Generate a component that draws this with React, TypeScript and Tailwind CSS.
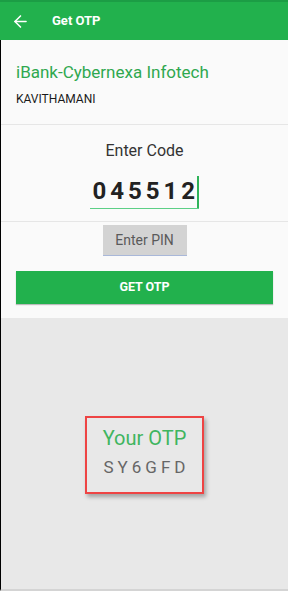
import { ArrowLeft } from 'lucide-react';

export default function App() {
  return (
    <div className="flex h-[591px] w-[288px] flex-col overflow-hidden bg-[#e8e8e8] font-['Roboto',sans-serif]">
      {/* Toolbar */}
      <div className="border-t-2 border-[#1c9d45] bg-[#22b14d]">
        <div className="flex h-[38px] items-center">
          <ArrowLeft className="ml-[11px] h-[19px] w-[19px] text-white" strokeWidth={2} />
          <span className="ml-[22px] text-[13px] font-bold text-white">Get OTP</span>
        </div>
      </div>

      <div className="flex flex-1 flex-col border-l border-black border-b-2 border-b-[#d4d4d4]">
        {/* Account */}
        <div className="border-b border-[#e6e6e6] bg-[#fafafa] px-[15px] pt-[20px] pb-[17px]">
          <div className="text-[17px] leading-[24px] text-[#2fa84f]">iBank-Cybernexa Infotech</div>
          <div className="mt-[7px] text-[12px] leading-[16px] text-[#1a1a1a]">KAVITHAMANI</div>
        </div>

        {/* Code entry */}
        <div className="flex flex-col items-center border-b border-[#e6e6e6] bg-[#fafafa] pt-[15px] pb-[12px]">
          <div className="text-[16px] leading-[22px] text-[#333]">Enter Code</div>
          <div className="mt-[14px] flex items-end">
            <div className="border-b-[1.5px] border-[#5ccf86] pl-[2px] pb-[2px]">
              <span className="text-[24px] font-bold leading-[30px] tracking-[4px] text-[#222]">045512</span>
            </div>
            <div className="mb-[1px] ml-[-2px] h-[32px] w-[1.5px] bg-[#2fb35a]" />
          </div>
        </div>

        <div className="bg-[#fafafa] pb-[14px]">
          <div className="flex justify-center pt-[3px]">
            <div className="flex h-[31px] w-[84px] items-center justify-center border-b border-[#a9b8d9] bg-[#d3d3d3] text-[14px] text-[#5a5a5a]">
              Enter PIN
            </div>
          </div>
          <div className="mx-[15px] mt-[15px] flex h-[33px] items-center justify-center bg-[#22b14d] text-[12.5px] font-bold text-white shadow-[0_1px_1px_rgba(0,0,0,0.25)]">
            GET OTP
          </div>
        </div>

        {/* OTP display */}
        <div className="flex flex-1 justify-center bg-[#e8e8e8] pt-[98px]">
          <div className="flex h-[78px] w-[119px] flex-col items-center border-2 border-[#ee4444] pt-[6px] shadow-[2px_3px_4px_rgba(0,0,0,0.3)]">
            <div className="text-[20px] leading-[28px] text-[#3fb55f]">Your OTP</div>
            <div className="mt-[4px] pl-[4px] text-[17px] leading-[22px] tracking-[4px] text-[#666]">SY6GFD</div>
          </div>
        </div>
      </div>
    </div>
  );
}
